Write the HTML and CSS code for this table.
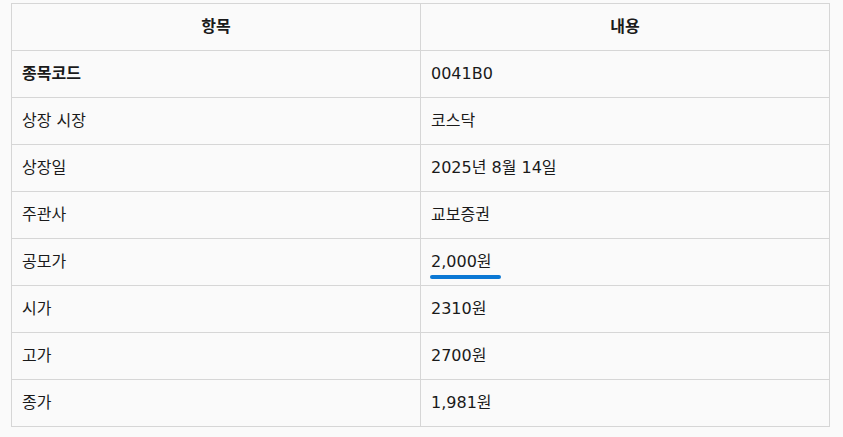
FILE: index.html
```html
<!DOCTYPE html>
<html lang="ko">
<head>
<meta charset="utf-8">
<link rel="stylesheet" href="styles.css">
</head>
<body>
<div class="wrap">
<table class="info">
  <thead>
    <tr><th>항목</th><th>내용</th></tr>
  </thead>
  <tbody>
    <tr><td><strong>종목코드</strong></td><td>0041B0</td></tr>
    <tr><td>상장 시장</td><td>코스닥</td></tr>
    <tr><td>상장일</td><td>2025년 8월 14일</td></tr>
    <tr><td>주관사</td><td>교보증권</td></tr>
    <tr><td>공모가</td><td><span class="mark">2,000원</span></td></tr>
    <tr><td>시가</td><td>2310원</td></tr>
    <tr><td>고가</td><td>2700원</td></tr>
    <tr><td>종가</td><td>1,981원</td></tr>
  </tbody>
</table>
</div>
</body>
</html>
```
FILE: styles.css
```css
html, body {
  margin: 0;
  background: #fafafa;
}
body {
  font-family: "DejaVu Sans", "Noto Sans CJK KR", sans-serif;
  color: #1a1a1a;
  font-size: 16px;
}
.wrap {
  padding: 3px 0 0 11px;
}
.info {
  width: 819px;
  border-collapse: collapse;
  table-layout: fixed;
}
.info th, .info td {
  border: 1px solid #d6d6d6;
  height: 47px;
  padding: 0 10px;
  box-sizing: border-box;
  vertical-align: middle;
  line-height: 24px;
}
.info th {
  font-weight: 700;
  text-align: center;
}
.info td {
  text-align: left;
  font-weight: 400;
}
.info strong {
  font-weight: 700;
}
.mark {
  position: relative;
  display: inline-block;
}
.mark::after {
  content: "";
  position: absolute;
  left: -1px;
  right: -9px;
  bottom: -5px;
  height: 4px;
  border-radius: 2px;
  background: #0b78d4;
}
```
